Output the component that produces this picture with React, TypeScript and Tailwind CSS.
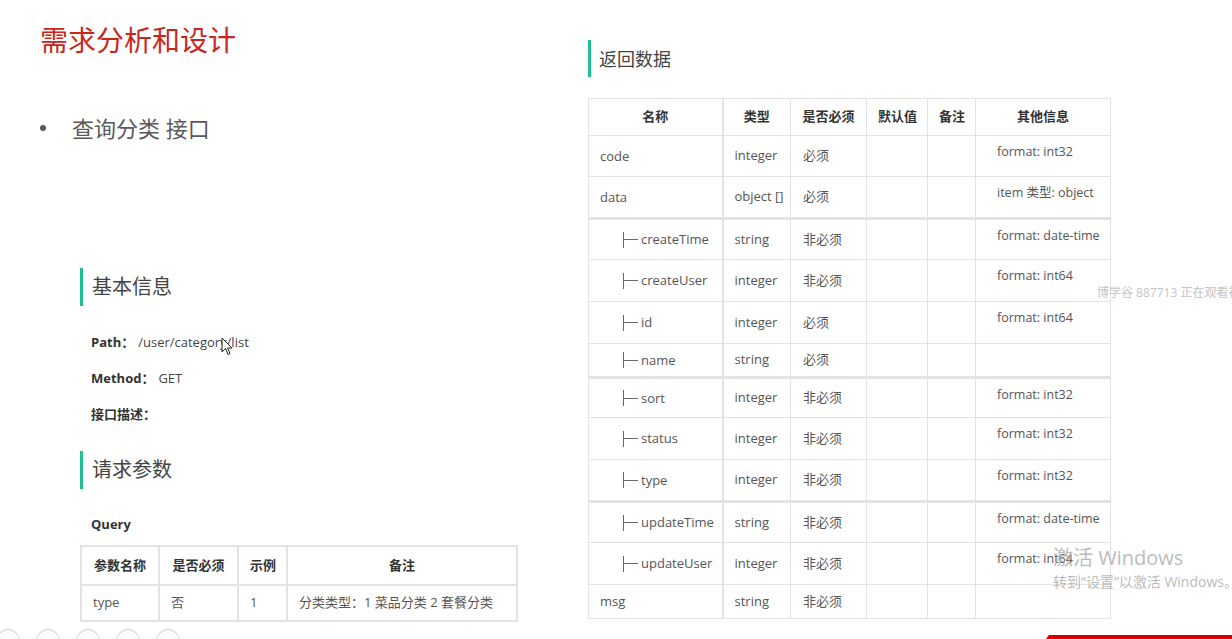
import React from "react";

const font = { fontFamily: '"Open Sans", "Noto Sans CJK SC", sans-serif' };

type Row = {
  name: string;
  child?: boolean;
  type: string;
  req: string;
  info?: string;
  h: string;
  thick?: boolean;
};

const rows: Row[] = [
  { name: "code", type: "integer", req: "必须", info: "format: int32", h: "h-[41px]" },
  { name: "data", type: "object []", req: "必须", info: "item 类型: object", h: "h-[42px]" },
  { name: "createTime", child: true, type: "string", req: "非必须", info: "format: date-time", h: "h-[41px]", thick: true },
  { name: "createUser", child: true, type: "integer", req: "非必须", info: "format: int64", h: "h-[42px]" },
  { name: "id", child: true, type: "integer", req: "必须", info: "format: int64", h: "h-[42px]" },
  { name: "name", child: true, type: "string", req: "必须", h: "h-[34px]" },
  { name: "sort", child: true, type: "integer", req: "非必须", info: "format: int32", h: "h-[40px]", thick: true },
  { name: "status", child: true, type: "integer", req: "非必须", info: "format: int32", h: "h-[42px]" },
  { name: "type", child: true, type: "integer", req: "非必须", info: "format: int32", h: "h-[42px]" },
  { name: "updateTime", child: true, type: "string", req: "非必须", info: "format: date-time", h: "h-[41px]", thick: true },
  { name: "updateUser", child: true, type: "integer", req: "非必须", info: "format: int64", h: "h-[42px]" },
  { name: "msg", type: "string", req: "非必须", h: "h-[34px]" },
];

function SectionTitle({ text }: { text: string }) {
  return (
    <div className="flex h-[38px] items-stretch">
      <div className="w-[3px] bg-[#1fbf95]" />
      <div className="flex items-center pl-[9px] text-[20px] text-[#444]">{text}</div>
    </div>
  );
}

function TreeMark() {
  return (
    <span className="mr-[3px] inline-flex h-[16px] items-center align-middle">
      <span className="h-[16px] w-[1px] bg-[#666]" />
      <span className="h-[1px] w-[14px] bg-[#666]" />
    </span>
  );
}

function ReturnTable() {
  const cell = "border border-[#e3e3e3] px-[11px] align-middle whitespace-nowrap";
  return (
    <table className="w-[522px] table-fixed border-collapse text-[13px] text-[#555]">
      <colgroup>
        <col className="w-[134px]" />
        <col className="w-[68px]" />
        <col className="w-[76px]" />
        <col className="w-[61px]" />
        <col className="w-[48px]" />
        <col className="w-[135px]" />
      </colgroup>
      <thead>
        <tr className="h-[37px] font-bold text-[#333]">
          <th className={`${cell} border-r-2 text-center`}>名称</th>
          <th className={`${cell} px-0 text-center`}>类型</th>
          <th className={`${cell} px-0 text-center`}>是否必须</th>
          <th className={`${cell} px-0 text-center`}>默认值</th>
          <th className={`${cell} px-0 text-center`}>备注</th>
          <th className={`${cell} text-center`}>其他信息</th>
        </tr>
      </thead>
      <tbody>
        {rows.map((r) => (
          <tr key={r.name + r.type + r.h} className={`${r.h} ${r.thick ? "border-t-[3px] border-t-[#e3e3e3]" : ""}`}>
            <td className={`${cell} border-r-2 ${r.child ? "pl-[34px]" : ""}`}>
              {r.child && <TreeMark />}
              <span className="align-middle">{r.name}</span>
            </td>
            <td className={`${cell} pr-0`}>{r.type}</td>
            <td className={`${cell} px-[12px]`}>{r.req}</td>
            <td className={cell} />
            <td className={cell} />
            <td className={`${cell} pl-[21px] pr-0 pt-[7px] align-top text-[12.5px]`}>{r.info ?? ""}</td>
          </tr>
        ))}
      </tbody>
    </table>
  );
}

function QueryTable() {
  const cell = "border-2 border-[#e3e3e3] px-[11px] whitespace-nowrap";
  return (
    <table className="w-[436px] table-fixed border-collapse text-[13px] text-[#555]">
      <colgroup>
        <col className="w-[78px]" />
        <col className="w-[79px]" />
        <col className="w-[49px]" />
        <col className="w-[230px]" />
      </colgroup>
      <thead>
        <tr className="h-[39px] font-bold text-[#333]">
          <th className={`${cell} px-0 text-center`}>参数名称</th>
          <th className={`${cell} px-0 text-center`}>是否必须</th>
          <th className={`${cell} px-0 text-center`}>示例</th>
          <th className={`${cell} text-center`}>备注</th>
        </tr>
      </thead>
      <tbody>
        <tr className="h-[36px]">
          <td className={cell}>type</td>
          <td className={cell}>否</td>
          <td className={cell}>1</td>
          <td className={cell}>分类类型：1 菜品分类 2 套餐分类</td>
        </tr>
      </tbody>
    </table>
  );
}

export default function App() {
  return (
    <div className="relative h-[639px] w-[1232px] overflow-hidden bg-white" style={font}>
      <div className="flex">
        {/* left column */}
        <div className="flex w-[588px] flex-col">
          <h1 className="ml-[40px] mt-[22px] text-[28px] leading-[36px] font-normal text-[#c9271d]">需求分析和设计</h1>
          <div className="ml-[40px] mt-[56px] flex items-center text-[22px] leading-[28px] text-[#595959]">
            <span className="flex w-[32px] items-center">
              <span className="h-[6px] w-[6px] rounded-full bg-[#595959]" />
            </span>
            <span>查询分类 接口</span>
          </div>
          <div className="ml-[80px] mt-[126px]">
            <SectionTitle text="基本信息" />
            <div className="mt-[26px] flex flex-col gap-[16px] pl-[11px] text-[13px] leading-[20px] text-[#444]">
              <div>
                <span className="font-bold text-[#333]">Path：</span>
                <span className="ml-[4px]">/user/category/list</span>
              </div>
              <div>
                <span className="font-bold text-[#333]">Method：</span>
                <span className="ml-[4px]">GET</span>
              </div>
              <div className="font-bold text-[#333]">接口描述：</div>
            </div>
            <div className="mt-[27px]">
              <SectionTitle text="请求参数" />
            </div>
            <div className="mt-[25px] pl-[11px] text-[13px] leading-[20px] font-bold text-[#333]">Query</div>
            <div className="mt-[11px]">
              <QueryTable />
            </div>
          </div>
        </div>

        {/* right column */}
        <div className="flex flex-col">
          <div className="mt-[40px] flex h-[37px] items-stretch">
            <div className="w-[3px] bg-[#1fbf95]" />
            <div className="flex items-center pl-[8px] pt-[2px] text-[18px] text-[#444]">返回数据</div>
          </div>
          <div className="mt-[21px]">
            <ReturnTable />
          </div>
        </div>
      </div>

      {/* watermark overlays */}
      <div className="absolute left-[1097px] top-[284px] whitespace-nowrap text-[12px] text-[#c4c4c4]">博学谷 887713 正在观看视频</div>
      <div className="absolute left-[1053px] top-[545px] whitespace-nowrap text-[20px] leading-[26px] text-[#a9a9a9]/80">激活 Windows</div>
      <div className="absolute left-[1053px] top-[573px] whitespace-nowrap text-[14px] leading-[18px] text-[#a9a9a9]/80">转到“设置”以激活 Windows。</div>

      {/* presentation controls at bottom */}
      <div className="absolute left-[-4px] top-[629px] flex gap-[16px]">
        {[0, 1, 2, 3, 4].map((i) => (
          <div key={i} className="h-[24px] w-[24px] rounded-full border border-[#cfcfcf]" />
        ))}
      </div>

      {/* red bar bottom right */}
      <div className="absolute left-[1046px] top-[635px] h-[4px] w-[186px] bg-[#d50000] [clip-path:polygon(3px_0,100%_0,100%_100%,0_100%)]" />

      {/* mouse cursor */}
      <svg className="absolute left-[221px] top-[337px]" width="12" height="19" viewBox="0 0 12 19">
        <path d="M1 1 L1 15 L4.5 11.5 L7 17.5 L9 16.6 L6.6 11 L11 11 Z" fill="#fff" stroke="#222" strokeWidth="1" strokeLinejoin="round" />
      </svg>
    </div>
  );
}
